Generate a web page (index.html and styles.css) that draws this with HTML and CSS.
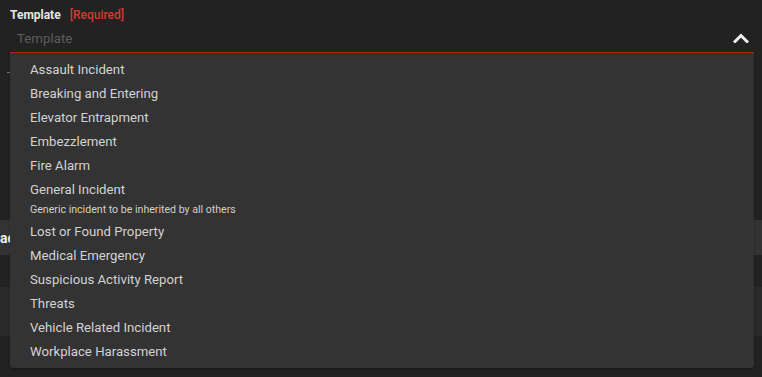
FILE: index.html
```html
<!DOCTYPE html>
<html>
<head>
<meta charset="utf-8">
<link rel="stylesheet" href="styles.css">
</head>
<body>
<div class="page">
  <div class="field">
    <div class="label-row"><span class="label">Template</span><span class="req">[Required]</span></div>
    <div class="input-row">
      <span class="placeholder">Template</span>
      <svg class="chevron" width="16" height="10" viewBox="0 0 16 10"><path d="M2 8.5 L8 2.5 L14 8.5" fill="none" stroke="#f2f2f2" stroke-width="3" stroke-linecap="square"/></svg>
    </div>
    <ul class="menu">
      <li class="item">Assault Incident</li>
      <li class="item">Breaking and Entering</li>
      <li class="item">Elevator Entrapment</li>
      <li class="item">Embezzlement</li>
      <li class="item">Fire Alarm</li>
      <li class="item item-desc"><span class="title">General Incident</span><span class="sub">Generic incident to be inherited by all others</span></li>
      <li class="item">Lost or Found Property</li>
      <li class="item">Medical Emergency</li>
      <li class="item">Suspicious Activity Report</li>
      <li class="item">Threats</li>
      <li class="item">Vehicle Related Incident</li>
      <li class="item">Workplace Harassment</li>
    </ul>
  </div>
  <div class="mark"></div>
  <div class="bar"><span class="bar-text">ace</span></div>
  <div class="band"></div>
</div>
</body>
</html>
```

FILE: styles.css
```css
html, body {
  margin: 0;
  padding: 0;
  background: #222222;
  font-family: Roboto, "Liberation Sans", sans-serif;
}
.page {
  width: 762px;
  height: 377px;
  overflow: hidden;
}
.field {
  position: relative;
  margin: 0 8px 0 10px;
}
.label-row {
  padding-top: 6px;
  height: 18px;
  line-height: 18px;
  font-size: 12px;
}
.label {
  font-weight: 700;
  color: #e6e6e6;
}
.req {
  margin-left: 9px;
  color: #d23b2e;
  font-weight: 500;
}
.input-row {
  display: flex;
  align-items: center;
  justify-content: space-between;
  height: 28px;
  border-bottom: 1px solid #b8231a;
}
.placeholder {
  padding-left: 7px;
  font-size: 13.3px;
  color: #5c5c5c;
}
.chevron {
  margin-right: 5px;
  margin-top: 0;
}
.menu {
  position: absolute;
  top: 53px;
  left: 0;
  right: 0;
  margin: 0;
  padding: 5px 0 4px;
  list-style: none;
  background: #333333;
  border-radius: 0 0 3px 3px;
  box-shadow: 0 1px 2px rgba(0,0,0,0.35);
  z-index: 2;
}
.item {
  padding-left: 20px;
  height: 24px;
  line-height: 24px;
  font-size: 13.2px;
  color: #d2d2d2;
}
.item-desc {
  height: auto;
  display: flex;
  flex-direction: column;
  padding-bottom: 3px;
}
.item-desc .title {
  line-height: 24px;
}
.item-desc .sub {
  font-size: 10.6px;
  line-height: 15px;
  color: #cfcfcf;
}
.mark {
  margin: 19px 0 0 7px;
  width: 3px;
  height: 1px;
  background: #777;
}
.bar {
  margin-top: 147px;
  height: 35px;
  background: #333333;
  overflow: hidden;
  display: flex;
  align-items: center;
}
.bar-text {
  font-size: 14px;
  font-weight: 700;
  color: #f0f0f0;
}
.band {
  margin-top: 32px;
  height: 49px;
  background: #2a2a2a;
}
```
